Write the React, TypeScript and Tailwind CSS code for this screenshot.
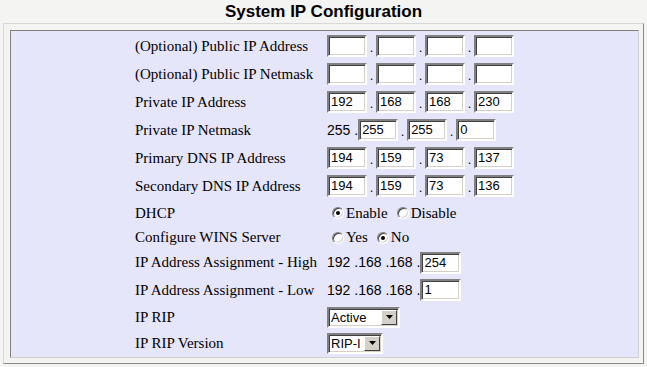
import React from 'react';

const serif = { fontFamily: '"Liberation Serif", "Times New Roman", serif' };
const sans = { fontFamily: '"Liberation Sans", Arial, sans-serif' };

const TextBox = ({ value = '', w = 'w-[40px]' }: { value?: string; w?: string }) => (
    <div
        className={`${w} h-[22px] bg-white border-2 border-t-[#808080] border-l-[#808080] border-b-white border-r-white shadow-[inset_1px_1px_0_#404040,inset_-1px_-1px_0_#d4d0c8] pl-[2px] text-[13px] leading-[18px] text-black`}
        style={sans}
    >
        {value}
    </div>
);

const Dot = () => <span className="w-[9px] text-center text-[13px] leading-[18px] self-end" style={sans}>.</span>;

const IpInputs = ({ parts }: { parts: string[] }) => (
    <div className="flex items-center">
        <TextBox value={parts[0]} />
        <Dot />
        <TextBox value={parts[1]} />
        <Dot />
        <TextBox value={parts[2]} />
        <Dot />
        <TextBox value={parts[3]} />
    </div>
);

const Radio = ({ checked }: { checked?: boolean }) => (
    <span className="relative ml-[5px] mr-[2px] w-[12px] h-[12px] rounded-full bg-white border border-t-[#808080] border-l-[#808080] border-b-white border-r-white shadow-[inset_1px_1px_0_#404040,inset_-1px_-1px_0_#d4d0c8] flex items-center justify-center">
        {checked && <span className="w-[4px] h-[4px] rounded-full bg-black" />}
    </span>
);

const Select = ({ value, w }: { value: string; w: string }) => (
    <div
        className={`${w} h-[21px] flex bg-white border-2 border-t-[#808080] border-l-[#808080] border-b-white border-r-white shadow-[inset_1px_1px_0_#404040,inset_-1px_-1px_0_#d4d0c8] text-[13px] text-black`}
        style={sans}
    >
        <span className="flex-1 pl-[2px] leading-[17px]">{value}</span>
        <span className="w-[16px] h-[15px] mt-[1px] mr-[1px] bg-[#d4d0c8] border border-t-white border-l-white border-b-[#404040] border-r-[#404040] flex items-center justify-center">
            <svg width="7" height="4" viewBox="0 0 7 4">
                <path d="M0 0h7L3.5 4z" fill="#000" />
            </svg>
        </span>
    </div>
);

const Row = ({ label, h, children }: { label: string; h: string; children: React.ReactNode }) => (
    <div className={`flex items-center ${h}`}>
        <div className="w-[192px] text-[15px] text-black whitespace-nowrap" style={serif}>
            {label}
        </div>
        <div className="flex items-center">{children}</div>
    </div>
);

const PlainText = ({ children }: { children: React.ReactNode }) => (
    <span className="text-[14px] text-black whitespace-pre" style={sans}>
        {children}
    </span>
);

const RadioLabel = ({ children }: { children: React.ReactNode }) => (
    <span className="text-[15px] text-black" style={serif}>
        {children}
    </span>
);

export default function App() {
    return (
        <div className="w-[647px] h-[367px] bg-[#f4f4f2] overflow-hidden">
            <div className="h-[23px] flex items-center justify-center text-[17px] font-bold text-black" style={sans}>
                System IP Configuration
            </div>
            <div className="ml-[3px] w-[641px] h-[341px] border border-t-[#d8d8d8] border-l-[#d8d8d8] border-b-[#8a8a8a] border-r-[#8a8a8a] pl-[6px] pr-[4px] pt-[6px] pb-[5px]">
                <div className="h-full bg-[#e6e6fa] border border-t-[#808080] border-l-[#808080] border-b-[#d0d0d0] border-r-[#d0d0d0] pl-[124px] pt-[1px]">
                    <Row label="(Optional) Public IP Address" h="h-[28px]">
                        <IpInputs parts={['', '', '', '']} />
                    </Row>
                    <Row label="(Optional) Public IP Netmask" h="h-[28px]">
                        <IpInputs parts={['', '', '', '']} />
                    </Row>
                    <Row label="Private IP Address" h="h-[28px]">
                        <IpInputs parts={['192', '168', '168', '230']} />
                    </Row>
                    <Row label="Private IP Netmask" h="h-[28px]">
                        <PlainText>255 .</PlainText>
                        <TextBox value="255" />
                        <Dot />
                        <TextBox value="255" />
                        <Dot />
                        <TextBox value="0" />
                    </Row>
                    <Row label="Primary DNS IP Address" h="h-[28px]">
                        <IpInputs parts={['194', '159', '73', '137']} />
                    </Row>
                    <Row label="Secondary DNS IP Address" h="h-[28px]">
                        <IpInputs parts={['194', '159', '73', '136']} />
                    </Row>
                    <Row label="DHCP" h="h-[26px]">
                        <Radio checked />
                        <RadioLabel>Enable</RadioLabel>
                        <span className="w-[4px]" />
                        <Radio />
                        <RadioLabel>Disable</RadioLabel>
                    </Row>
                    <Row label="Configure WINS Server" h="h-[23px]">
                        <Radio />
                        <RadioLabel>Yes</RadioLabel>
                        <span className="w-[4px]" />
                        <Radio checked />
                        <RadioLabel>No</RadioLabel>
                    </Row>
                    <Row label="IP Address Assignment - High" h="h-[27px]">
                        <PlainText>192 .168 .168 .</PlainText>
                        <TextBox value="254" w="w-[41px]" />
                    </Row>
                    <Row label="IP Address Assignment - Low" h="h-[28px]">
                        <PlainText>192 .168 .168 .</PlainText>
                        <TextBox value="1" w="w-[41px]" />
                    </Row>
                    <Row label="IP RIP" h="h-[26px]">
                        <Select value="Active" w="w-[73px]" />
                    </Row>
                    <Row label="IP RIP Version" h="h-[26px]">
                        <Select value="RIP-I" w="w-[56px]" />
                    </Row>
                </div>
            </div>
        </div>
    );
}
